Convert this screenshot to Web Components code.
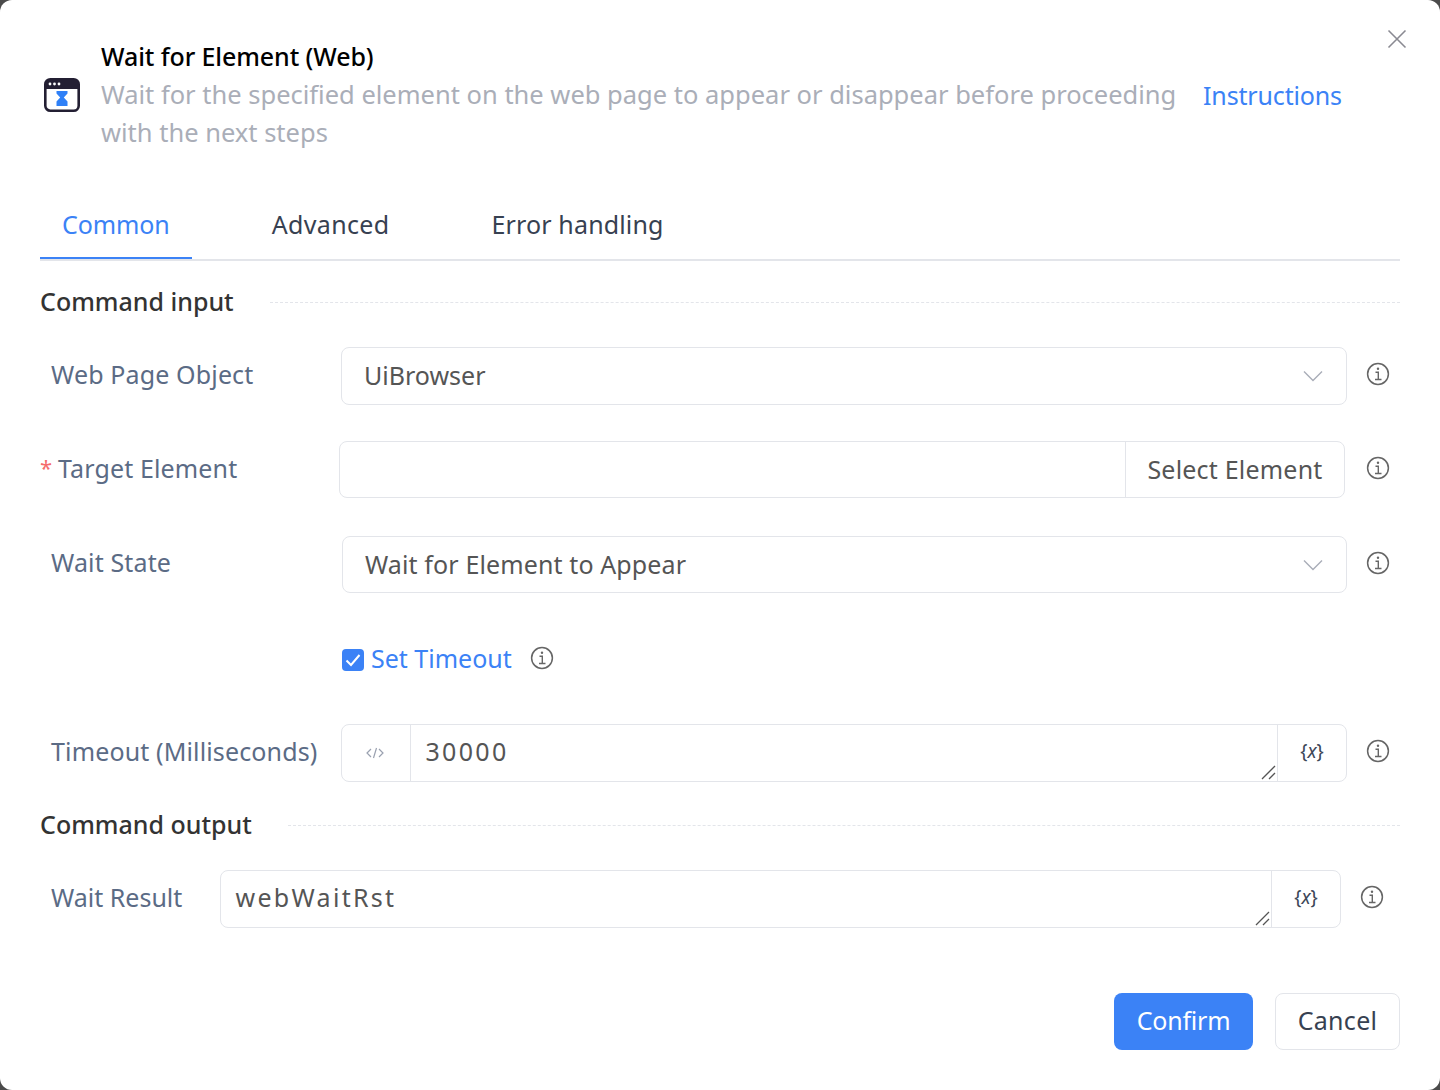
<!DOCTYPE html>
<html><head><meta charset="utf-8"><style>
html,body{margin:0;padding:0;background:#4b4b4b;}
body{font-family:"Noto Sans","Noto Sans CJK SC",sans-serif;width:1440px;height:1090px;overflow:hidden}
</style></head><body>
<task-dialog>
  <dialog-header title-text="Wait for Element (Web)"></dialog-header>
  <tab-bar></tab-bar>
  <section-title style="--mt:22px;">Command input</section-title>
  <form-row label="Web Page Object" style="--mt:26px;--lw:301px"><select-box style="--h:58px">UiBrowser</select-box></form-row>
  <form-row label="Target Element" required style="--mt:36px;--lw:299px"><element-picker></element-picker></form-row>
  <form-row label="Wait State" style="--mt:38px;--lw:302px;--lb:5px"><select-box style="--h:57px;--ls:.12px">Wait for Element to Appear</select-box></form-row>
  <check-row style="--mt:48px"></check-row>
  <form-row label="Timeout (Milliseconds)" style="--mt:45px;--lw:301px"><var-input value="30000" prefix></var-input></form-row>
  <section-title style="--mt:24px">Command output</section-title>
  <form-row label="Wait Result" style="--mt:26px;--lw:180px;--end:1301px;--lls:0px"><var-input value="webWaitRst"></var-input></form-row>
  <dialog-footer></dialog-footer>
</task-dialog>
<script>
const INFO=`<svg width="24" height="24" viewBox="0 0 24 24" fill="none" stroke="#666" stroke-width="1.5"><circle cx="12" cy="12" r="10.4"/><circle cx="12" cy="6.800" r="1.2" fill="#666" stroke="none"/><path d="M9.500 10.300H12.300V17.300M9 17.500H15.500" stroke-width="1.4"/></svg>`;
function def(name,css,html){
  customElements.define(name,class extends HTMLElement{
    connectedCallback(){
      if(this.shadowRoot)return;
      const s=this.attachShadow({mode:'open'});
      s.innerHTML=`<style>${css}</style>`+(typeof html==='function'?html(this):html);
    }
  });
}
def('info-icon',`:host{display:inline-flex;width:24px;height:24px}`,INFO);
def('task-dialog',`:host{display:block;box-sizing:border-box;width:1440px;height:1090px;background:#fff;border-radius:12px;padding:37px 40px 0;}`,`<slot></slot>`);
def('dialog-header',`:host{display:flex;align-items:center;position:relative}
.ic{width:61px;flex:none;padding-left:4px;box-sizing:border-box;display:flex;margin-top:2px}
.t{font-size:25px;line-height:38px;color:#000;font-weight:500;letter-spacing:-.1px}
.b{display:flex;flex:1}
.d{font-size:25.5px;line-height:38px;color:#aaaeb8;width:1080px}
a{font-size:25px;line-height:38px;color:#3b82f6;margin:1px 0 0 22px;display:block;white-space:nowrap;letter-spacing:-.15px}
.x{position:absolute;left:1346px;top:-9px;width:22px;height:22px}`,
t=>`<div class="ic"><svg width="36" height="34" viewBox="0 0 36 34"><rect x="1.3" y="1.3" width="33.4" height="31.4" rx="5" fill="#fff" stroke="#231f33" stroke-width="2.6"/><path d="M1 6a5 5 0 0 1 5-5h24a5 5 0 0 1 5 5v5H1z" fill="#231f33"/><circle cx="6" cy="6" r="1.4" fill="#fff"/><circle cx="10.5" cy="6" r="1.4" fill="#fff"/><circle cx="15" cy="6" r="1.4" fill="#fff"/><path d="M12.5 13H23.5V15.5L19.8 19.5 23.5 23.500V28H12.5V23.5L16.2 19.500 12.500 15.5z" fill="#2f80f7"/></svg></div>
<div><div class="t">${t.getAttribute('title-text')}</div><div class="b"><div class="d">Wait for the specified element on the web page to appear or disappear before proceeding with the next steps</div><a>Instructions</a></div></div>
<svg class="x" viewBox="0 0 22 22" fill="none" stroke="#8a8a92" stroke-width="1.6"><path d="M2.500 2.500 19.500 19.500M19.500 2.500 2.500 19.500"/></svg>`);
def('tab-bar',`:host{display:flex;gap:58px;margin-top:39px;border-bottom:2px solid #e3e5ea;height:71px;box-sizing:border-box}
div{font-size:25px;line-height:68px;padding:0 22px;color:#374151;height:69px;box-sizing:border-box}
div:nth-of-type(1){letter-spacing:-.1px}
div:nth-of-type(2){letter-spacing:.35px}
div:nth-of-type(3){letter-spacing:.15px}
.on{color:#3b82f6;border-bottom:2px solid #3b82f6}`,
`<div class="on">Common</div><div>Advanced</div><div>Error handling</div>`);
def('section-title',`:host{display:flex;align-items:center;margin-top:var(--mt);gap:36px;height:38px}
span{font-size:25px;font-weight:500;color:#333;line-height:38px;white-space:nowrap;margin-top:-2px}
i{flex:1;border-top:1px dashed #e3e5ea}`,`<span><slot></slot></span><i></i>`);
def('form-row',`:host{display:flex;align-items:center;margin-top:var(--mt);width:var(--end,1307px);box-sizing:border-box;position:relative}
.l{width:var(--lw);flex:none;font-size:25px;letter-spacing:var(--lls,.14px);color:#5b6b85;line-height:38px;padding-left:11px;box-sizing:border-box;margin-bottom:var(--lb,4px);white-space:nowrap}
.l.r{padding-left:0}
.l b{color:#f56c6c;font-weight:400;font-size:22px;display:inline-block;width:18px;vertical-align:top;margin-top:-1px}
.c{flex:1;min-width:0}
.i{position:absolute;left:calc(100% + 19px);top:calc(50% - 14px);}`,
t=>`<div class="l ${t.hasAttribute('required')?'r':''}">${t.hasAttribute('required')?'<b>*</b>':''}${t.getAttribute('label')}</div><div class="c"><slot></slot></div><info-icon class="i"></info-icon>`);
def('select-box',`:host{display:flex;align-items:center;justify-content:space-between;box-sizing:border-box;height:var(--h);border:1px solid #e3e5ea;border-radius:8px;padding:0 23.500px 0 22px;font-size:25px;color:#555;letter-spacing:var(--ls,0)}
span{margin-top:-2px}
svg{flex:none}`,`<span><slot></slot></span><svg width="20" height="12" viewBox="0 0 20 12" fill="none" stroke="#a9adb8" stroke-width="1.4"><path d="M1 1.500 10 10.500 19 1.500"/></svg>`);
def('element-picker',`:host{display:flex;box-sizing:border-box;height:57px;margin-right:2px;border:1px solid #e3e5ea;border-radius:8px;font-size:25px;color:#555;letter-spacing:.2px}
.a{flex:1}.b{width:219px;border-left:1px solid #e3e5ea;display:flex;align-items:center;justify-content:center;box-sizing:border-box;padding-bottom:2px}`,
`<div class="a"></div><div class="b">Select Element</div>`);
def('var-input',`:host{display:flex;box-sizing:border-box;height:58px;border:1px solid #e3e5ea;border-radius:8px;color:#555}
.p{width:69px;box-sizing:border-box;border-right:1px solid #e3e5ea;display:flex;align-items:center;justify-content:center;flex:none;padding-right:2px}
.v{flex:1;font-size:25px;letter-spacing:2.3px;padding-left:14.500px;line-height:52px;position:relative}
.g{position:absolute;right:1px;bottom:1px}
.s{width:69px;box-sizing:border-box;flex:none;border-left:1px solid #e3e5ea;display:flex;align-items:center;justify-content:center;font:italic 19px "Noto Sans",sans-serif;color:#3c4657;padding-bottom:4px}
.s span{font-style:normal}`,
t=>`${t.hasAttribute('prefix')?`<div class="p"><svg width="18" height="12" viewBox="0 0 18 12" fill="none" stroke="#9aa1b0" stroke-width="1.2"><path d="M5 2 1 6l4 4M13 2l4 4-4 4M10.500 1 7.500 11"/></svg></div>`:''}<div class="v">${t.getAttribute('value')}<svg class="g" width="15" height="15" viewBox="0 0 15 15" fill="none" stroke="#555" stroke-width="1.300"><path d="M1 14 14 1M8 14l6-6"/></svg></div><div class="s"><span>{</span>x<span>}</span></div>`);
def('check-row',`:host{display:flex;align-items:center;margin-top:var(--mt);padding-left:302px;height:38px}
.b{width:22px;height:22px;background:#3b82f6;border-radius:4px;display:flex;align-items:center;justify-content:center;margin-right:7px}
span{font-size:25px;color:#3b82f6;line-height:38px;margin-right:18px;margin-top:-4px}
info-icon{margin-top:-5px}`,
`<div class="b"><svg width="16" height="14" viewBox="0 0 16 14" fill="none" stroke="#fff" stroke-width="2"><path d="M1.500 7.500 6 12 14.500 2"/></svg></div><span>Set Timeout</span><info-icon></info-icon>`);
def('dialog-footer',`:host{display:flex;justify-content:flex-end;gap:22px;margin-top:65px}
div{box-sizing:border-box;height:57px;border-radius:8px;font-size:25px;display:flex;align-items:center;justify-content:center;padding-bottom:4px}
.a{width:139px;background:#3b82f6;color:#fff;letter-spacing:-.2px}
.b{width:125px;border:1px solid #e3e5ea;color:#374151;letter-spacing:.3px}`,`<div class="a">Confirm</div><div class="b">Cancel</div>`);
</script>
</body></html>
